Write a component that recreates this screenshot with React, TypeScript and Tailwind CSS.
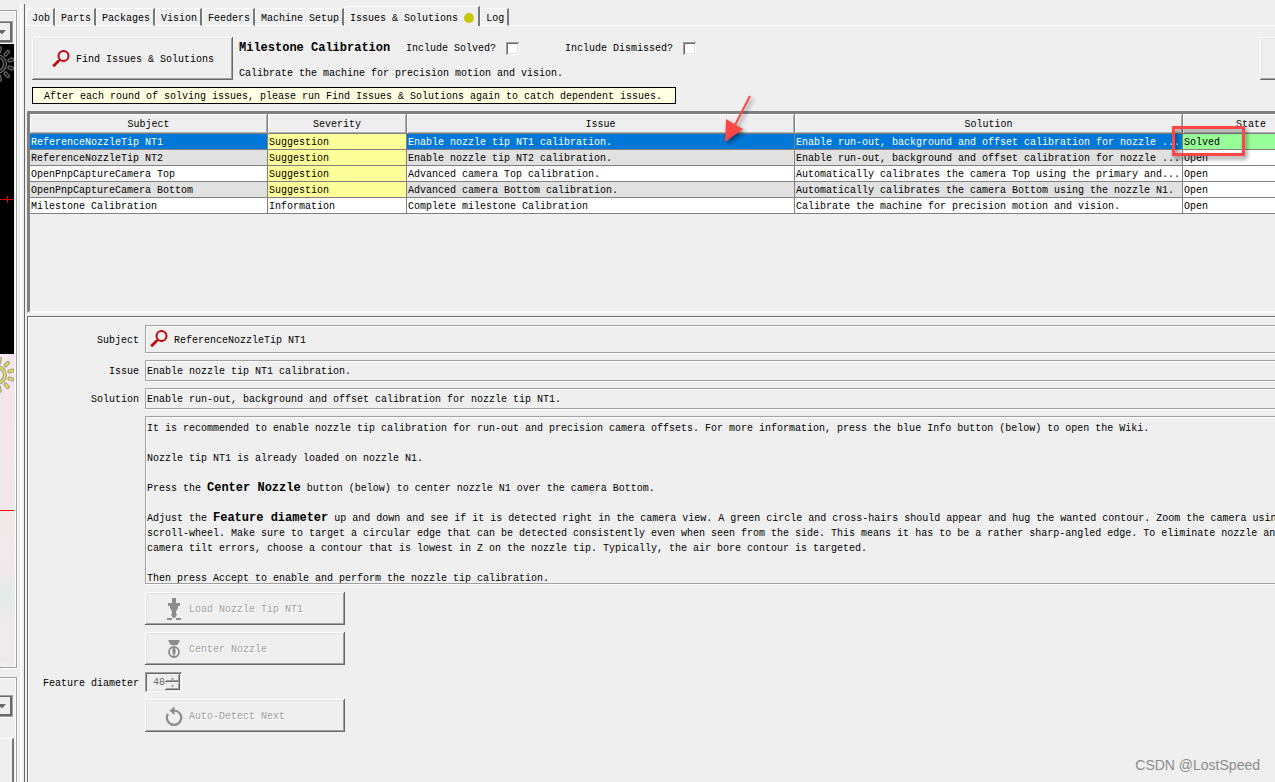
import React from "react";

const bevel =
  "shadow-[inset_-1px_-1px_#696969,inset_1px_1px_#ffffff,inset_-2px_-2px_#a0a0a0,inset_2px_2px_#e3e3e3]";
const sunken =
  "shadow-[inset_1px_1px_#a0a0a0,inset_-1px_-1px_#ffffff,inset_2px_2px_#696969,inset_-2px_-2px_#e3e3e3]";
const field = "border border-[#a0a0a0] shadow-[inset_1px_1px_#ffffff,0_1px_#ffffff]";

const tabs = ["Job", "Parts", "Packages", "Vision", "Feeders", "Machine Setup", "Issues & Solutions", "Log"];

type Issue = {
  subject: string;
  severity: string;
  issue: string;
  solution: string;
  state: string;
};

const issues: Issue[] = [
  {
    subject: "ReferenceNozzleTip NT1",
    severity: "Suggestion",
    issue: "Enable nozzle tip NT1 calibration.",
    solution: "Enable run-out, background and offset calibration for nozzle ...",
    state: "Solved",
  },
  {
    subject: "ReferenceNozzleTip NT2",
    severity: "Suggestion",
    issue: "Enable nozzle tip NT2 calibration.",
    solution: "Enable run-out, background and offset calibration for nozzle ...",
    state: "Open",
  },
  {
    subject: "OpenPnpCaptureCamera Top",
    severity: "Suggestion",
    issue: "Advanced camera Top calibration.",
    solution: "Automatically calibrates the camera Top using the primary and...",
    state: "Open",
  },
  {
    subject: "OpenPnpCaptureCamera Bottom",
    severity: "Suggestion",
    issue: "Advanced camera Bottom calibration.",
    solution: "Automatically calibrates the camera Bottom using the nozzle N1.",
    state: "Open",
  },
  {
    subject: "Milestone Calibration",
    severity: "Information",
    issue: "Complete milestone Calibration",
    solution: "Calibrate the machine for precision motion and vision.",
    state: "Open",
  },
];

function Magnifier() {
  return (
    <svg width="18" height="18" viewBox="0 0 18 18" fill="none" stroke="#c0060c" className="shrink-0">
      <circle cx="11.5" cy="6" r="5" strokeWidth="2" />
      <path d="M8 9.5 L6.5 11" strokeWidth="2" />
      <path d="M6.8 10.8 L1.2 16.2" strokeWidth="2.8" />
    </svg>
  );
}

function Sun({ fill, stroke }: { fill: string; stroke: string }) {
  const angles = [-80, -48, -16, 16, 48, 80];
  return (
    <svg width="14" height="36" viewBox="0 0 14 36" className="block shrink-0">
      <circle cx="-3" cy="18" r="8" fill="none" stroke={stroke} strokeWidth="4" />
      <circle cx="-3" cy="18" r="8" fill="none" stroke={fill} strokeWidth="2" />
      {angles.map((a) => (
        <g key={a} transform={`translate(-3 18) rotate(${a})`}>
          <rect x="11.5" y="-1.5" width="6" height="3" rx="1" fill={fill} stroke={stroke} strokeWidth="1" />
        </g>
      ))}
    </svg>
  );
}

function ComboEnd({ label }: { label: string }) {
  return (
    <button
      aria-label={label}
      className="flex h-[22px] w-[13px] items-center justify-start border-y border-r border-[#a0a0a0] shadow-[inset_-2px_-2px_#696969,inset_0_1px_#696969,1px_1px_#ffffff]"
    >
      <svg width="7" height="5" viewBox="0 0 7 5">
        <path d="M-2 0H6L2 4.5Z" fill="#696969" />
      </svg>
    </button>
  );
}

function CameraColumn() {
  return (
    <aside className="flex w-5 shrink-0 flex-col overflow-hidden pt-[10px]">
      <section className="mr-[3px] border-y border-r border-[#a0a0a0] pt-[10px] shadow-[1px_1px_#ffffff,inset_-1px_1px_#ffffff]">
        <ComboEnd label="Top camera view" />
        <div className="mt-px flex h-[310px] w-[14px] flex-col bg-black pt-[2px]">
          <Sun fill="#1c1c1c" stroke="#77777a" />
          <div className="mt-[114px] ml-[7px] h-[3px] w-px bg-[#e00000]" />
          <div className="h-px bg-[#e00000]" />
          <div className="ml-[7px] h-[3px] w-px bg-[#e00000]" />
        </div>
        <div className="flex h-[309px] w-[14px] flex-col bg-linear-to-b from-[#f4e6ec] via-[#f1e8ea] via-55% to-[#eeeaec] pt-[3px]">
          <Sun fill="#dede60" stroke="#9a9a80" />
          <div className="mt-[117px] h-px bg-[#ff0000]" />
          <div className="mt-[60px] h-[50px] bg-linear-to-b from-transparent via-[#e3ebe8] to-transparent" />
        </div>
        <div className="h-1" />
      </section>
      <section className="mt-[9px] mr-[3px] flex-1 border-t border-r border-[#a0a0a0] pt-[17px] shadow-[1px_0_#ffffff,inset_-1px_1px_#ffffff]">
        <ComboEnd label="Tool selection" />
        <div className="mt-[21px] mr-[2px] h-20 border-t border-r-2 border-t-white border-r-[#787878]" />
      </section>
    </aside>
  );
}

function Tabs() {
  return (
    <nav role="tablist" className="flex items-end pt-[6px] pl-px">
      {tabs.map((name) => {
        const active = name === "Issues & Solutions";
        return (
          <button
            key={name}
            role="tab"
            aria-selected={active}
            className={
              active
                ? "flex h-5 items-center gap-[6px] rounded-tl-[3px] border-t border-r-2 border-l border-t-white border-r-[#787878] border-l-white pt-[2px] pr-[4px] pl-[5px] whitespace-nowrap"
                : "h-[18px] rounded-tl-[3px] border-t border-r-2 border-b border-l border-t-white border-r-[#787878] border-b-white border-l-white pt-[3px] pr-[3px] pl-[5px] leading-[13px] whitespace-nowrap"
            }
          >
            <span className={active ? "pt-[2px]" : ""}>{name}</span>
            {active && <span className="size-[10px] rounded-full bg-[#c8c800]" />}
          </button>
        );
      })}
      <div className="h-px flex-1 bg-white" />
    </nav>
  );
}

function Toolbar() {
  return (
    <header className="pl-[7px]">
      <div className="flex pt-[11px]">
        <button className={`flex h-[43px] w-[201px] shrink-0 items-center gap-[6px] pl-5 ${bevel}`}>
          <Magnifier />
          <span className="pt-[2px]">Find Issues &amp; Solutions</span>
        </button>
        <div className="flex flex-1 flex-col gap-[10px] pt-1 pl-[6px]">
          <div className="flex h-[15px] items-center">
            <h1 className="w-[167px] text-[12px] leading-[15px] font-bold">Milestone Calibration</h1>
            <label htmlFor="solved" className="w-[100px]">Include Solved?</label>
            <input id="solved" type="checkbox" className={`size-[13px] appearance-none bg-white ${sunken}`} />
            <label htmlFor="dismissed" className="ml-[46px] w-[118px]">Include Dismissed?</label>
            <input id="dismissed" type="checkbox" className={`size-[13px] appearance-none bg-white ${sunken}`} />
          </div>
          <p className="h-[14px]">Calibrate the machine for precision motion and vision.</p>
        </div>
        <button
          aria-label="Accept"
          className="w-[15px] shrink-0 shadow-[inset_0_-1px_#696969,inset_1px_1px_#ffffff,inset_0_-2px_#a0a0a0,inset_2px_2px_#e3e3e3]"
        />
      </div>
      <p className="mt-[7px] flex h-[17px] w-[644px] items-center border border-black bg-[#ffffe1] pt-[2px] pl-[11px] whitespace-nowrap">
        After each round of solving issues, please run Find Issues &amp; Solutions again to catch dependent issues.
      </p>
    </header>
  );
}

function IssueTable() {
  const head =
    "border-r border-b border-[#808080] p-0 pt-[2px] font-normal shadow-[inset_1px_1px_#ffffff,inset_-1px_-1px_#b0b0b0]";
  const cell =
    "overflow-hidden border-r border-b border-[#808080] p-0 pt-[2px] pl-px leading-[13px] whitespace-nowrap";
  return (
    <div className="mt-[7px] ml-[2px] h-[202px] overflow-hidden border-t-[3px] border-b-2 border-l-[3px] border-t-[#808080] border-b-white border-l-[#808080]">
      <table className="w-[1290px] table-fixed border-separate border-spacing-0">
        <colgroup>
          <col className="w-[238px]" />
          <col className="w-[139px]" />
          <col className="w-[388px]" />
          <col className="w-[388px]" />
          <col className="w-[137px]" />
        </colgroup>
        <thead>
          <tr className="h-5">
            {["Subject", "Severity", "Issue", "Solution", "State"].map((h) => (
              <th key={h} className={head}>{h}</th>
            ))}
          </tr>
        </thead>
        <tbody>
          {issues.map((row, i) => {
            const selected = i === 0;
            const base = selected ? "bg-[#0078d7] text-white" : i % 2 ? "bg-[#e1e1e1]" : "bg-white";
            const severity = row.severity === "Suggestion" ? "bg-[#ffff99]" : "bg-white";
            const state = row.state === "Solved" ? "bg-[#99ff99]" : "bg-white";
            return (
              <tr key={row.subject} className="h-4">
                <td className={`${cell} ${base}`}>{row.subject}</td>
                <td className={`${cell} ${severity}`}>{row.severity}</td>
                <td className={`${cell} ${base}`}>{row.issue}</td>
                <td className={`${cell} ${base}`}>{row.solution}</td>
                <td className={`${cell} ${state}`}>{row.state}</td>
              </tr>
            );
          })}
        </tbody>
      </table>
    </div>
  );
}

function NozzleIcon() {
  return (
    <svg width="16" height="24" viewBox="0 0 16 24" fill="#8c8c8c">
      <path d="M6 1h4v5h4v3h-2v2l-2 3.500v2l1 1-2 3.500h-2L5 17.500l1-1v-2L4 11V9H2V6h4Z" />
      <path d="M1 21h5v2H1ZM10 21h5v2h-5Z" />
    </svg>
  );
}

function CenterIcon() {
  return (
    <svg width="16" height="20" viewBox="0 0 16 20" fill="none" stroke="#8c8c8c">
      <path d="M2 1h12l-2.500 5h-7Z" fill="#8c8c8c" stroke="none" />
      <circle cx="8" cy="13" r="5" strokeWidth="1.8" />
      <path d="M8 5v14" strokeWidth="1" />
      <path d="M7 9h2l.8 3L9 15.5H7L6.2 12Z" fill="#8c8c8c" stroke="none" />
    </svg>
  );
}

function RedoIcon() {
  return (
    <svg width="18" height="20" viewBox="0 0 18 20" fill="none" stroke="#8c8c8c">
      <path d="M9 4.500A7.200 7.200 0 1 1 3 7.800" strokeWidth="2.2" />
      <path d="M9.500 0.500V9L4.500 4.700Z" fill="#8c8c8c" stroke="none" />
    </svg>
  );
}

function ActionButton({ icon, children }: { icon: React.ReactNode; children: React.ReactNode }) {
  return (
    <button
      disabled
      className={`flex h-[33px] w-[200px] items-center pl-5 text-[#a0a0a0] [text-shadow:1px_1px_#ffffff] ${bevel}`}
    >
      <span className="flex w-[18px] justify-center">{icon}</span>
      <span className="pt-[2px] pl-[6px]">{children}</span>
    </button>
  );
}

function Details() {
  const label = "pr-[6px] pt-[2px] text-right";
  return (
    <section className="mt-[3px] ml-[2px] flex-1 overflow-hidden border-t border-l border-[#696969] pt-2 shadow-[inset_1px_1px_#ffffff]">
      <div className="grid grid-cols-[117px_minmax(0,1fr)] items-center">
        <span className={label}>Subject</span>
        <div className={`flex h-7 items-center gap-[6px] border-r-0 pl-1 ${field}`}>
          <Magnifier />
          <span className="pt-[2px]">ReferenceNozzleTip NT1</span>
        </div>

        <label htmlFor="issue" className={`mt-[7px] ${label}`}>Issue</label>
        <input id="issue" readOnly value="Enable nozzle tip NT1 calibration." className={`mt-[7px] h-[21px] border-r-0 pt-[2px] pl-px ${field}`} />

        <label htmlFor="solution" className={`mt-[7px] ${label}`}>Solution</label>
        <input
          id="solution"
          readOnly
          value="Enable run-out, background and offset calibration for nozzle tip NT1."
          className={`mt-[7px] h-[21px] border-r-0 pt-[2px] pl-px ${field}`}
        />

        <div className={`col-start-2 mt-[7px] flex h-[168px] flex-col gap-[15px] overflow-hidden border-r-0 pt-1 pl-px whitespace-nowrap [&_b]:text-[12px] [&_b]:leading-none ${field}`}>
          <p>
            It is recommended to enable nozzle tip calibration for run-out and precision camera offsets. For more information,
            press the blue Info button (below) to open the Wiki.
          </p>
          <p>Nozzle tip NT1 is already loaded on nozzle N1.</p>
          <p>
            Press the <b>Center Nozzle</b> button (below) to center nozzle N1 over the camera Bottom.
          </p>
          <p>
            Adjust the <b>Feature diameter</b> up and down and see if it is detected right in the camera view. A green circle
            and cross-hairs should appear and hug the wanted contour. Zoom the camera using
            <br />
            scroll-wheel. Make sure to target a circular edge that can be detected consistently even when seen from the side.
            This means it has to be a rather sharp-angled edge. To eliminate nozzle and
            <br />
            camera tilt errors, choose a contour that is lowest in Z on the nozzle tip. Typically, the air bore contour is
            targeted.
          </p>
          <p>Then press Accept to enable and perform the nozzle tip calibration.</p>
        </div>

        <div className="col-start-2 mt-2">
          <ActionButton icon={<NozzleIcon />}>Load Nozzle Tip NT1</ActionButton>
        </div>
        <div className="col-start-2 mt-[7px]">
          <ActionButton icon={<CenterIcon />}>Center Nozzle</ActionButton>
        </div>

        <label htmlFor="diameter" className={`mt-[7px] whitespace-nowrap ${label}`}>Feature diameter</label>
        <div className={`mt-[7px] flex h-5 w-[37px] p-[2px] ${sunken}`}>
          <input
            id="diameter"
            type="text"
            inputMode="numeric"
            disabled
            defaultValue="48"
            className="w-[18px] pt-px text-right text-[#6d6d6d]"
          />
          <div className="flex flex-1 flex-col">
            <button disabled aria-label="Increase" className={`flex flex-1 items-center justify-center ${bevel}`}>
              <svg width="5" height="3" viewBox="0 0 5 3"><path d="M1 2.5 2.5 0.5 4 2.5Z" fill="#808080" /></svg>
            </button>
            <button disabled aria-label="Decrease" className={`flex flex-1 items-center justify-center ${bevel}`}>
              <svg width="5" height="3" viewBox="0 0 5 3"><path d="M1 .5 2.5 2.5 4 .5Z" fill="#808080" /></svg>
            </button>
          </div>
        </div>

        <div className="col-start-2 mt-[7px]">
          <ActionButton icon={<RedoIcon />}>Auto-Detect Next</ActionButton>
        </div>
      </div>
    </section>
  );
}

export default function App() {
  return (
    <div className="relative flex h-screen overflow-hidden bg-[#efefef] font-['Liberation_Mono',monospace] text-[10px] leading-[15px] text-black">
      <CameraColumn />
      <div className="mt-1 mr-[2px] w-[2px] shrink-0 bg-white" />
      <div className="mt-1 w-px shrink-0 bg-[#696969]" />
      <main className="flex min-w-0 flex-1 flex-col">
        <Tabs />
        <Toolbar />
        <IssueTable />
        <Details />
      </main>

      <svg width="50" height="60" viewBox="0 0 50 60" className="absolute top-[90px] left-[710px] drop-shadow-[2px_3px_2px_rgba(0,0,0,0.45)]">
        <path d="M40 6 L25 35" stroke="#fb4747" strokeWidth="2" />
        <path d="M15 52 L16 29 L33 39 Z" fill="#fb4747" />
      </svg>
      <div className="absolute top-[126px] left-[1172px] h-[30px] w-[73px] border-[3px] border-[#fb4747] drop-shadow-[2px_3px_2px_rgba(0,0,0,0.45)]" />
      <p className="absolute right-[15px] bottom-[7px] font-['Liberation_Sans',sans-serif] text-sm leading-5 text-[#8c8c8c]">CSDN @LostSpeed</p>
    </div>
  );
}
